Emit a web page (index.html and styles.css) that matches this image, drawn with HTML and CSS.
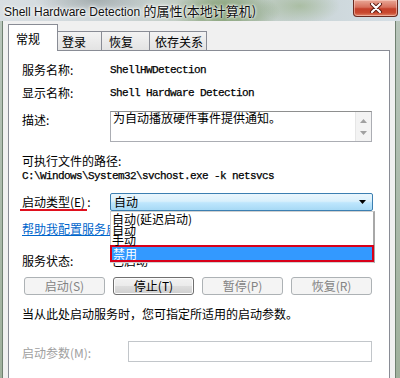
FILE: index.html
```html
<!DOCTYPE html>
<html>
<head>
<meta charset="utf-8">
<link rel="stylesheet" href="styles.css">
</head>
<body>
<div class="window">
  <div class="titlebar">
    <div class="title">Shell Hardware Detection <span class="title-cjk">的属性(本地计算机)</span></div>
    <div class="close">
      <svg width="16" height="10" viewBox="0 0 16 10">
        <path d="M4 1 L12 9 M12 1 L4 9" stroke="#5a1a10" stroke-width="4" stroke-linecap="round"/>
        <path d="M4 1 L12 9 M12 1 L4 9" stroke="#ffffff" stroke-width="2.2" stroke-linecap="round"/>
      </svg>
    </div>
  </div>
  <div class="client">
    <div class="tabs">
      <div class="tab active">常规</div>
      <div class="tab">登录</div>
      <div class="tab">恢复</div>
      <div class="tab">依存关系</div>
    </div>
    <div class="panel">
      <div class="row r1"><span class="label">服务名称:</span><span class="mono">ShellHWDetection</span></div>
      <div class="row r2"><span class="label">显示名称:</span><span class="mono">Shell Hardware Detection</span></div>
      <div class="row r3">
        <span class="label desc-label">描述:</span>
        <div class="textarea">
          <div class="ta-text">为自动播放硬件事件提供通知。</div>
          <div class="ta-scroll">
            <svg width="7" height="4" viewBox="0 0 7 4"><path d="M0 4 L3.5 0 L7 4 Z" fill="#a0a0a0"/></svg>
            <svg width="7" height="4" viewBox="0 0 7 4"><path d="M0 0 L3.5 4 L7 0 Z" fill="#a0a0a0"/></svg>
          </div>
        </div>
      </div>
      <div class="row r4"><span>可执行文件的路径:</span></div>
      <div class="row r5"><span class="mono">C:\Windows\System32\svchost.exe -k netsvcs</span></div>
      <div class="row r6">
        <span class="label"><span class="underlined">启动类型(E)</span>:</span>
        <div class="combo">
          <span class="combo-text">自动</span>
          <svg class="combo-arrow" width="7" height="4" viewBox="0 0 7 4"><path d="M0 0 L3.5 4 L7 0 Z" fill="#000"/></svg>
          <div class="dropdown">
            <div class="item i1">自动(延迟启动)</div>
            <div class="item i2">自动</div>
            <div class="item i3">手动</div>
            <div class="item i4">禁用</div>
          </div>
        </div>
      </div>
      <div class="row r7"><span class="link">帮助我配置服务启动选项。</span></div>
      <div class="row r8"><span class="label">服务状态:</span><span class="status">已启动</span></div>
      <div class="row r9">
        <div class="btn disabled">启动(S)</div>
        <div class="btn">停止(T)</div>
        <div class="btn disabled">暂停(P)</div>
        <div class="btn disabled">恢复(R)</div>
      </div>
      <div class="row r10"><span>当从此处启动服务时，您可指定所适用的启动参数。</span></div>
      <div class="row r11">
        <span class="label param-label">启动参数(M):</span>
        <div class="input"></div>
      </div>
    </div>
  </div>
</div>
</body>
</html>
```

FILE: styles.css
```css
* { box-sizing: border-box; }
html, body { margin: 0; padding: 0; }
body {
  width: 400px;
  height: 378px;
  overflow: hidden;
  font-family: "Noto Sans CJK SC", sans-serif;
  font-size: 12px;
  color: #000;
  background: linear-gradient(to bottom, #b9c6bc, #9fb09c);
}
.window {
  height: 378px;
  display: flex;
  flex-direction: column;
}
.titlebar {
  height: 21px;
  flex: none;
  display: flex;
  align-items: flex-start;
  padding-left: 4px;
  background:
    radial-gradient(ellipse 55px 22px at 225px 12px, rgba(105, 140, 85, 0.85), rgba(105, 140, 85, 0) 100%),
    radial-gradient(ellipse 40px 18px at 300px 6px, rgba(150, 175, 130, 0.6), rgba(150, 175, 130, 0) 100%),
    radial-gradient(ellipse 60px 16px at 95px 0px, rgba(130, 140, 140, 0.55), rgba(130, 140, 140, 0) 100%),
    linear-gradient(to right, #d9dfe3, #cdd5d8 30%, #b8c6b4 55%, #c9d4d6 75%, #d6dfe6);
}
.title {
  flex: 1;
  font-family: "Liberation Sans", "Noto Sans CJK SC", sans-serif;
  font-size: 12px;
  line-height: 21px;
  color: #111;
  text-shadow: 0 0 5px #fff, 0 0 3px #fff, 0 0 2px #fff;
  white-space: nowrap;
}
.title-cjk { font-family: "Noto Sans CJK SC", sans-serif; font-size: 13px; }
.close {
  width: 45px;
  height: 17px;
  margin-right: 2px;
  border: 1px solid #6a2a20;
  border-top: none;
  border-radius: 0 0 4px 4px;
  background: linear-gradient(to bottom, #e9a897 0%, #d7705c 45%, #c4402a 55%, #c9492f 80%, #e0866a 100%);
  box-shadow: inset 0 0 0 1px rgba(255, 220, 210, 0.5);
  display: flex;
  align-items: center;
  justify-content: center;
}
.client {
  flex: 1;
  margin: 0 4px 0 2px;
  border-left: 1px solid #6f8070;
  border-right: 1px solid #6f8070;
  background: #f0f0f0;
  padding: 3px 5px 0 5px;
  display: flex;
  flex-direction: column;
}
.tabs {
  height: 26px;
  flex: none;
  display: flex;
  align-items: flex-end;
}
.tab {
  height: 19px;
  padding: 1px 0 0 5px;
  border: 1px solid #898c95;
  border-bottom: none;
  border-left: none;
  background: linear-gradient(to bottom, #f3f3f3, #e3e3e3);
  line-height: 18px;
  white-space: nowrap;
  overflow: hidden;
}
.tab.active {
  height: 27px;
  margin-bottom: -1px;
  width: 50px;
  padding: 2px 0 0 7px;
  border-left: 1px solid #898c95;
  background: #fff;
  line-height: 24px;
  position: relative;
  z-index: 1;
}
.tab:nth-child(2) { width: 44px; padding-left: 4px; }
.tab:nth-child(3) { width: 48px; padding-left: 7px; }
.tab:nth-child(4) { width: 57px; padding-left: 5px; }
.panel {
  flex: 1;
  background: #fff;
  border: 1px solid #898c95;
  border-bottom: none;
  padding-left: 13px;
  display: flex;
  flex-direction: column;
}
.row {
  display: flex;
  align-items: center;
  line-height: 16px;
  white-space: nowrap;
}
.label { width: 88px; flex: none; }
.mono {
  font-family: "Liberation Mono", monospace;
  font-size: 11px;
  letter-spacing: -0.6px;
  -webkit-text-stroke: 0.25px #000;
}
.r1 { margin-top: 11px; }
.r2 { margin-top: 7px; }
.r3 { margin-top: 10px; align-items: flex-start; }
.desc-label { margin-top: 1px; }
.textarea {
  width: 262px;
  height: 31px;
  border: 1px solid #abadb3;
  border-top-color: #8e8f8f;
  display: flex;
  justify-content: space-between;
}
.ta-text { padding: 0 0 0 2px; line-height: 12px; }
.ta-scroll {
  width: 16px;
  background: #f3f3f3;
  border-left: 1px solid #e6e6e6;
  display: flex;
  flex-direction: column;
  align-items: center;
  justify-content: space-between;
  padding: 7px 0 6px;
}
.r4 { margin-top: 11px; line-height: 15px; }
.r5 { line-height: 16px; }
.r6 { margin-top: 9px; position: relative; z-index: 3; }
.underlined {
  border-bottom: 2px solid #e0101e;
  margin-left: -2px;
  padding: 0 2px 0 2px;
  line-height: 14px;
  display: inline-block;
}
.combo {
  width: 263px;
  height: 18px;
  border: 1px solid #3c7fb1;
  border-radius: 2px;
  background: linear-gradient(to bottom, #eaf6fd 0%, #d9f0fc 45%, #bee6fd 55%, #a7d9f5 100%);
  position: relative;
  display: flex;
  align-items: center;
  padding-left: 3px;
}
.combo-text { line-height: 16px; }
.combo-arrow { position: absolute; right: 6px; top: 6px; }
.dropdown {
  position: absolute;
  top: 17px;
  left: -1px;
  width: 265px;
  height: 52px;
  background: #fff;
  border: 1px solid #d0d0d0;
  border-right: 2px solid #a8a8a8;
  padding-top: 1px;
}
.item { padding-left: 1px; }
.i1 { line-height: 12px; height: 12px; }
.i2 { line-height: 10px; height: 10px; }
.i3 { line-height: 10px; height: 10px; }
.i4 {
  height: 17px;
  line-height: 13px;
  border: 2px solid #d8001a;
  background: #3399ff;
  color: #fff;
  margin-right: -1px;
  margin-left: -1px;
}
.r7 { margin-top: 10px; }
.link { color: #0066cc; text-decoration: underline; }
.r8 { margin-top: 16px; }
.status { padding-left: 2px; }
.r9 { margin-top: 8px; padding-left: 2px; gap: 8px; }
.btn {
  width: 81px;
  height: 18px;
  border: 1px solid #707070;
  border-radius: 3px;
  background: linear-gradient(to bottom, #f2f2f2 0%, #ebebeb 48%, #dddddd 52%, #cfcfcf 100%);
  box-shadow: inset 0 0 0 1px #fcfcfc;
  text-align: center;
  line-height: 16px;
}
.btn.disabled {
  border-color: #adb2b5;
  background: #f4f4f4;
  color: #838383;
  box-shadow: none;
}
.r10 { margin-top: 11px; }
.r11 { margin-top: 19px; }
.param-label { width: 106px; color: #a0a0a0; margin-top: 2px; }
.input {
  width: 244px;
  height: 21px;
  border: 1px solid #c2c6ca;
  background: #fff;
}
```
